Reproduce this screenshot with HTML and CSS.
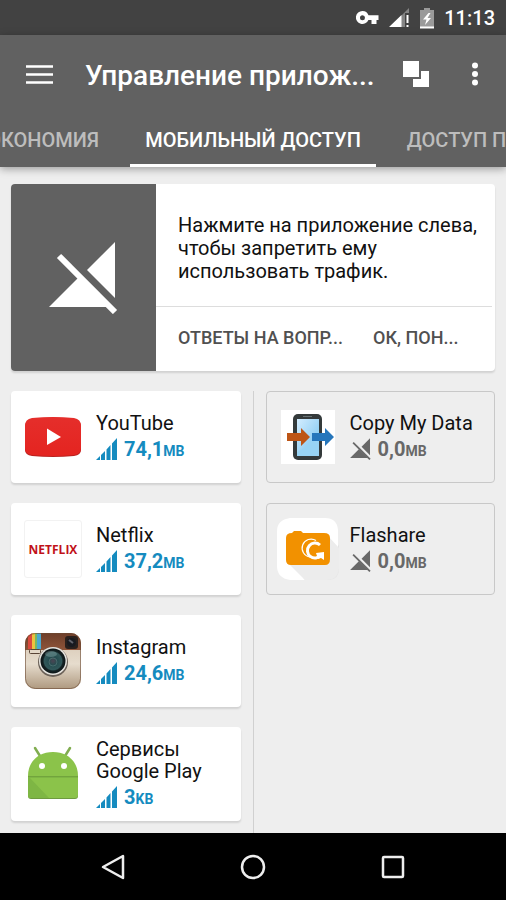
FILE: index.html
```html
<!DOCTYPE html>
<html lang="ru">
<head>
<meta charset="utf-8">
<meta name="viewport" content="width=device-width, initial-scale=1">
<title>Управление приложениями</title>
<link rel="stylesheet" href="styles.css">
</head>
<body>
<svg class="defs" aria-hidden="true">
  <symbol id="bars" viewBox="0 0 21 22"><path d="M0 22 4 18V22ZM5 17 9 13V22H5ZM10.500 11.500 14.500 7V22H10.500ZM16 5.500 21 0V22H16Z" fill="#158bbf"/></symbol>
  <symbol id="blocked" viewBox="0 0 69 73"><path d="M66 1V57L38 29ZM0 66 29 37 59 66Z" fill="currentColor"/><path d="M10 15 66 71" stroke="currentColor" stroke-width="6"/></symbol>
</svg>
<div class="screen">
  <div class="status">
    <svg width="23" height="14" viewBox="0 0 23 14"><path fill="#fff" fill-rule="evenodd" d="M6.5 0a6.5 6.5 0 0 1 6 4.3H22.500V9H20.500V13H15.500V9H12.400A6.500 6.500 0 1 1 6.500 0ZM6.500 4.300a2.500 2.500 0 1 0 0 5 2.500 2.500 0 0 0 0-5Z"/></svg>
    <svg width="21" height="20" viewBox="0 0 21 20"><path fill="#858585" d="M20 0V5H16V19H12V8Z"/><path fill="#fff" d="M0 19 12.500 7V19ZM17.500 7H19.500V15H17.500ZM17.500 17H19.500V19H17.500Z"/></svg>
    <svg width="14" height="21" viewBox="0 0 14 21"><path fill="#9a9a9a" d="M4 0H10V2H14V20H0V2H4Z"/><path fill="#fff" d="M0 18.500H14V20.500H0ZM8.500 5 3 11.500H6.500L5 17 11 10H7.500L10.500 5Z"/></svg>
    <span>11:13</span>
  </div>
  <header class="appbar">
    <div class="toolbar">
      <button class="icon-btn" aria-label="Меню"><svg width="27" height="19" viewBox="0 0 27 19"><path d="M0 1.500H27M0 9.500H27M0 17.500H27" stroke="#fff" stroke-width="2.600"/></svg></button>
      <h1>Управление прилож...</h1>
      <button class="icon-btn" aria-label="Окна"><svg width="26" height="26" viewBox="0 0 26 26"><path fill="#fff" d="M0 0H16V16H0ZM18 10H26V26H10V18H18Z"/></svg></button>
      <button class="icon-btn more" aria-label="Ещё"><svg width="6" height="24" viewBox="0 0 6 24"><g fill="#fff"><circle cx="3" cy="3.500" r="3"/><circle cx="3" cy="12" r="3"/><circle cx="3" cy="20.500" r="3"/></g></svg></button>
    </div>
    <nav class="tabs">
      <div class="side before"><a href="#economy">ЭКОНОМИЯ</a></div>
      <a class="active" href="#mobile" aria-current="page">МОБИЛЬНЫЙ ДОСТУП</a>
      <div class="side"><a href="#wifi">ДОСТУП ПО</a></div>
    </nav>
  </header>
  <main>
    <section class="tip">
      <div class="tip-icon"><svg width="69" height="73"><use href="#blocked"/></svg></div>
      <div class="tip-body">
        <p>Нажмите на приложение слева, чтобы запретить ему использовать трафик.</p>
        <div class="tip-actions"><button>ОТВЕТЫ НА ВОПР...</button><button>ОК, ПОН...</button></div>
      </div>
    </section>
    <div class="columns">
      <div class="list">
        <button class="app">
          <svg class="logo" viewBox="0 0 58 58"><defs><linearGradient id="yt" x2="0" y2="1"><stop stop-color="#e52e2b"/><stop offset="1" stop-color="#e42420"/></linearGradient></defs><path fill="#b9201d" d="M8 11Q29 8 50 11Q57 12 57 19V42Q57 47 50 48Q29 50 8 48Q1 47 1 42V19Q1 12 8 11Z"/><path fill="url(#yt)" d="M8 10Q29 8 50 10Q57 11 57 18V40Q57 46 50 47Q29 49 8 47Q1 46 1 40V18Q1 11 8 10Z"/><path fill="#fff" d="M23 20.500 37 29 23 37Z"/></svg>
          <span class="info"><span class="name">YouTube</span><span class="usage"><svg><use href="#bars"/></svg><b>74,1<small>MB</small></b></span></span>
        </button>
        <button class="app">
          <span class="logo netflix"><span>NETFLIX</span></span>
          <span class="info"><span class="name">Netflix</span><span class="usage"><svg><use href="#bars"/></svg><b>37,2<small>MB</small></b></span></span>
        </button>
        <button class="app">
          <svg class="logo" viewBox="0 0 58 58"><defs><clipPath id="cam"><rect x="1" y="1" width="56" height="56" rx="10"/></clipPath><linearGradient id="beige" x2="0" y2="1"><stop stop-color="#d3c2ae"/><stop offset=".55" stop-color="#e6dccd"/><stop offset="1" stop-color="#ac967c"/></linearGradient><linearGradient id="leather" x2="0" y2="1"><stop stop-color="#6b3d29"/><stop offset="1" stop-color="#8e5439"/></linearGradient><radialGradient id="lens"><stop stop-color="#4b4553"/><stop offset=".35" stop-color="#254d50"/><stop offset=".7" stop-color="#32585a"/><stop offset=".8" stop-color="#142224"/><stop offset="1" stop-color="#0d1516"/></radialGradient></defs>
            <g clip-path="url(#cam)"><path fill="url(#beige)" d="M0 0H58V58H0Z"/><path fill="url(#leather)" d="M0 0H58V18H0Z"/><path fill="#d94a3d" d="M4 0H8V17H4Z"/><path fill="#ecc23e" d="M8 0H11V17H8Z"/><path fill="#79b862" d="M11 0H13V17H11Z"/><path fill="#4aa9cf" d="M13 0H17V17H13Z"/></g>
            <rect x="1.500" y="1.500" width="55" height="55" rx="10" fill="none" stroke="#6b4a33" stroke-opacity=".6"/>
            <rect x="5.500" y="17.500" width="11" height="4" rx="1" fill="#e3d8c8" stroke="#594436"/>
            <rect x="41" y="4" width="13" height="13" rx="3" fill="#29201d"/><circle cx="47.500" cy="10.500" r="4.500" fill="#181a20"/><path d="M45 8 49 11" stroke="#60616a" stroke-width="2"/>
            <circle cx="29" cy="30" r="15" fill="#6b6158"/><circle cx="29" cy="29" r="14" fill="#e6e4df"/><circle cx="29" cy="29" r="12.500" fill="url(#lens)"/><ellipse cx="27" cy="22" rx="6" ry="3" fill="#8baeae" opacity=".4"/><circle cx="29" cy="30" r="4" fill="none" stroke="#688" opacity=".5"/></svg>
          <span class="info"><span class="name">Instagram</span><span class="usage"><svg><use href="#bars"/></svg><b>24,6<small>MB</small></b></span></span>
        </button>
        <button class="app">
          <svg class="logo" viewBox="0 0 58 58"><path d="M11 3 16 11M46 3 41 11" stroke="#80ad50" stroke-width="2.500" stroke-linecap="round"/><path fill="#6e9b3f" d="M4 50H54V51Q54 54 51 54H7Q4 54 4 51Z"/><path fill="#8bc34a" d="M4 31C4 16 15 7 29 7S54 16 54 31V50Q54 53 51 53H7Q4 53 4 50Z"/><path fill="#7eb644" d="M4 31H54V33H6L25 53H7Q4 53 4 50Z"/><path d="M4 31.500H54" stroke="#72a43d"/><circle cx="18" cy="21" r="3" fill="#fff"/><circle cx="40" cy="21" r="3" fill="#fff"/></svg>
          <span class="info"><span class="name">Сервисы<br>Google Play</span><span class="usage"><svg><use href="#bars"/></svg><b>3<small>KB</small></b></span></span>
        </button>
      </div>
      <div class="divider"></div>
      <div class="list">
        <button class="app off">
          <svg class="logo" viewBox="0 0 58 58"><defs><linearGradient id="glass" x2="1" y2="1"><stop stop-color="#d3edff"/><stop offset="1" stop-color="#79c3ee"/></linearGradient></defs><path fill="#fff" d="M2 2H56V56H2Z"/><rect x="14" y="6" width="29" height="46" rx="5" fill="#343a3b"/><rect x="18" y="11" width="22" height="37" fill="#98d4f5"/><path fill="url(#glass)" d="M18 11H40V15Q37 35 18 44Z"/><path d="M24 8.500H33" stroke="#687274"/><path fill="#bd5516" d="M8 25H22V20L31 29 22 38V33H8Z"/><path fill="#2676bb" d="M33 25H46V20L55 29 46 38V33H33Z"/></svg>
          <span class="info"><span class="name">Copy My Data</span><span class="usage"><svg><use href="#blocked"/></svg><b>0,0<small>MB</small></b></span></span>
        </button>
        <button class="app off">
          <svg class="logo" viewBox="0 0 58 58"><path fill="#e4e4e4" d="M56 20 60 26V49Q60 59 50 60H25Z"/><path fill="#fff" d="M11-2H46Q58-2 59 10V28L46 14 24 58 26 60H11Q-2 58-2 46V11Q-2 0 11-2Z"/><path fill="#ececec" d="M49 16 60 28V48Q59 60 48 60H26L9 43Z"/><path fill="#f29100" d="M15 11H22L24 13H45Q51 13 51 18V39Q51 45 46 45H12Q7 45 7 40V18Q7 13 13 13Z"/><path d="M37 20.500A9 9 0 1 0 31 37" fill="none" stroke="#fff" stroke-width="1.200"/><path d="M41 25A7.500 7.500 0 1 0 42 35" fill="none" stroke="#fff" stroke-width="3"/><path fill="#fff" d="M37 33 45 32V40L42 38 39 39Z"/></svg>
          <span class="info"><span class="name">Flashare</span><span class="usage"><svg><use href="#blocked"/></svg><b>0,0<small>MB</small></b></span></span>
        </button>
      </div>
    </div>
  </main>
  <footer class="navbar">
    <button aria-label="Назад"><svg width="26" height="28" viewBox="0 0 26 28"><path d="M23 3V25L3 14Z" fill="none" stroke="#eee" stroke-width="2.500" stroke-linejoin="round"/></svg></button>
    <button aria-label="Домой"><svg width="26" height="28" viewBox="0 0 26 28"><circle cx="13" cy="14" r="11" fill="none" stroke="#eee" stroke-width="2.500"/></svg></button>
    <button aria-label="Недавние"><svg width="26" height="28" viewBox="0 0 26 28"><rect x="3" y="4" width="20" height="20" rx="1" fill="none" stroke="#eee" stroke-width="2.500"/></svg></button>
  </footer>
</div>
</body>
</html>
```
FILE: styles.css
```css
* { box-sizing: border-box; }
body { margin: 0; font-family: Roboto, "Liberation Sans", sans-serif; color: #111; background: #eee; }
button { padding: 0; border: 0; background: none; font: inherit; color: inherit; text-align: left; cursor: pointer; }
a { color: inherit; text-decoration: none; }
svg { display: block; flex: none; overflow: visible; }
.defs { position: absolute; width: 0; height: 0; }
.screen { display: flex; flex-direction: column; height: 100vh; overflow: hidden; }

.status { display: flex; flex: none; align-items: center; justify-content: flex-end; gap: 10px; height: 35px; padding: 1px 11px 0; background: #424242; color: #fff; font-size: 20px; font-weight: 500; }

.appbar { z-index: 1; flex: none; background: #616161; color: #fff; box-shadow: 0 2px 8px rgba(0, 0, 0, .35); }
.toolbar { display: flex; align-items: center; height: 78px; padding: 0 28px 0 26px; }
.toolbar h1 { flex: 1; min-width: 0; margin: 0 0 0 32px; padding-top: 3px; overflow: hidden; white-space: nowrap; font-size: 28px; font-weight: 500; line-height: 36px; }
.more { margin-left: 43px; }
.tabs { display: grid; grid-template-columns: minmax(0, 1fr) auto minmax(0, 1fr); height: 54px; font-size: 20px; font-weight: 500; line-height: 54px; white-space: nowrap; }
.side { display: flex; overflow: hidden; padding: 0 31px; color: #bdbdbd; }
.side:last-child { padding-right: 0; }
.before { justify-content: flex-end; padding-left: 0; }
.active { height: 54px; padding: 0 15px; border-bottom: 3px solid #fff; }

main { display: flex; flex: 1; flex-direction: column; gap: 20px; min-height: 0; padding: 17px 11px 0; }
.tip { display: flex; flex: none; overflow: hidden; border-radius: 4px; background: #fff; box-shadow: 0 2px 2px rgba(0, 0, 0, .12); }
.tip-icon { display: grid; place-items: center; width: 145px; background: #616161; color: #fff; }
.tip-body { flex: 1; min-width: 0; }
.tip p { margin: 0; padding: 30px 16px 23px 22px; font-size: 20px; line-height: 23px; }
.tip-actions { display: flex; gap: 30px; align-items: center; height: 65px; margin-right: 3px; padding: 0 0 3px 22px; border-top: 1px solid #ddd; color: #505050; font-size: 18px; font-weight: 500; white-space: nowrap; }

.columns { display: grid; flex: 1; grid-template-columns: minmax(0, 1fr) 1px minmax(0, 1fr); gap: 12px; min-height: 0; }
.divider { background: #d0d0d0; }
.list { display: flex; flex-direction: column; gap: 20px; }
.app { display: flex; flex: none; gap: 14px; align-items: center; width: 100%; min-height: 92px; padding: 11px 13px; border-radius: 4px; background: #fff; box-shadow: 0 2px 2px rgba(0, 0, 0, .12); }
.off { gap: 13px; padding: 11px 12px; border: 1px solid #c8c8c8; background: transparent; box-shadow: none; color: #111; }
.logo { flex: none; width: 58px; height: 58px; }
.netflix { display: grid; place-items: center; border: 1px solid #f2f2f2; border-radius: 3px; background: #fff; color: #c11119; font-family: "Liberation Sans Narrow", "Open Sans", sans-serif; font-size: 12px; font-weight: 700; }
.info { display: flex; flex-direction: column; gap: 4px; }
.name { font-size: 20px; line-height: 22px; }
.usage { display: flex; gap: 7px; align-items: center; height: 24px; color: #158bbf; font-size: 20px; line-height: 24px; }
.usage svg { width: 21px; height: 22px; margin-bottom: 3px; }
.usage b { font-weight: 700; }
.usage small { font-size: 14px; }
.off .usage { color: #686868; }

.navbar { display: flex; flex: none; align-items: center; justify-content: center; gap: 50px; height: 67px; background: #000; }
.navbar button { flex: none; padding: 20px 32px; }
```
